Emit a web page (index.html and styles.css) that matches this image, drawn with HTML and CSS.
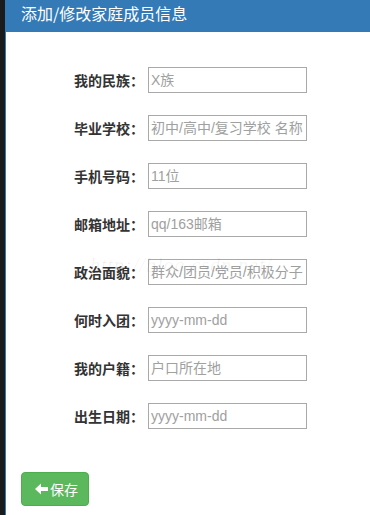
FILE: index.html
```html
<!DOCTYPE html>
<html lang="zh">
<head>
<meta charset="utf-8">
<link rel="stylesheet" href="styles.css">
</head>
<body>
<div class="page">
  <div class="strip"></div>
  <div class="main">
    <div class="header">添加/修改家庭成员信息</div>
    <form class="form">
      <div class="row"><label class="lbl">我的民族<span class="colon">：</span></label><input class="inp" placeholder="X族"></div>
      <div class="row"><label class="lbl">毕业学校<span class="colon">：</span></label><input class="inp" placeholder="初中/高中/复习学校 名称"></div>
      <div class="row"><label class="lbl">手机号码<span class="colon">：</span></label><input class="inp" placeholder="11位"></div>
      <div class="row"><label class="lbl">邮箱地址<span class="colon">：</span></label><input class="inp" placeholder="qq/163邮箱"></div>
      <div class="row"><span class="watermark">http://blog.csdn.net/</span><label class="lbl">政治面貌<span class="colon">：</span></label><input class="inp" placeholder="群众/团员/党员/积极分子"></div>
      <div class="row"><label class="lbl">何时入团<span class="colon">：</span></label><input class="inp" placeholder="yyyy-mm-dd"></div>
      <div class="row"><label class="lbl">我的户籍<span class="colon">：</span></label><input class="inp" placeholder="户口所在地"></div>
      <div class="row"><label class="lbl">出生日期<span class="colon">：</span></label><input class="inp" placeholder="yyyy-mm-dd"></div>
      <div class="actions">
        <button type="button" class="btn"><svg class="ico" width="13" height="12" viewBox="0 0 13 12"><path d="M0 6 L6 0.5 L6 4 L13 4 L13 8 L6 8 L6 11.5 Z" fill="#fff"/></svg>保存</button>
      </div>
    </form>
  </div>
</div>
</body>
</html>
```
FILE: styles.css
```css
html, body {
  margin: 0;
  padding: 0;
  background: #fff;
}
body {
  font-family: "Liberation Sans", "Noto Sans CJK SC", sans-serif;
  color: #333;
  font-size: 14px;
}
.page {
  display: flex;
  height: 515px;
  overflow: hidden;
}
.strip {
  width: 5px;
  flex: none;
  background: #1b1b1b;
}
.main {
  flex: 1;
  border-left: 1px solid #337ab7;
  background: #fff;
}
.header {
  height: 32px;
  box-sizing: border-box;
  background: #337ab7;
  color: #fff;
  font-size: 16px;
  line-height: 20px;
  padding: 3px 0 0 15px;
  font-family: "Noto Sans CJK SC", sans-serif;
}
.form {
  margin: 0;
  padding-top: 35px;
}
.row {
  display: flex;
  align-items: center;
  height: 26px;
  margin-bottom: 22px;
  position: relative;
}
.lbl {
  width: 138px;
  text-align: right;
  font-weight: bold;
  font-size: 14px;
  font-family: "Noto Sans CJK SC", sans-serif;
  color: #333;
  flex: none;
}
.colon {
  font-family: "Noto Sans CJK TC", sans-serif;
}
.inp {
  margin-left: 4px;
  width: 159px;
  height: 26px;
  box-sizing: border-box;
  border: 1px solid #a9a9a9;
  padding: 0 2px;
  font-size: 14px;
  font-family: "Liberation Sans", "Noto Sans CJK SC", sans-serif;
  color: #333;
  outline: none;
  border-radius: 0;
  background: #fff;
}
.inp::placeholder {
  color: #a0a0a0;
}
.watermark {
  position: absolute;
  left: 84px;
  top: -5px;
  font-size: 20px;
  font-style: italic;
  color: rgba(0, 0, 0, 0.06);
  font-family: "Liberation Serif", serif;
  pointer-events: none;
  letter-spacing: 1px;
}
.actions {
  padding: 21px 0 0 15px;
}
.btn {
  display: flex;
  align-items: center;
  height: 34px;
  width: 68px;
  box-sizing: border-box;
  padding: 0 0 0 13px;
  background: #5cb85c;
  border: 1px solid #4cae4c;
  border-radius: 4px;
  color: #fff;
  font-size: 14px;
  font-family: "Noto Sans CJK SC", sans-serif;
}
.ico {
  margin-right: 2px;
}
```
